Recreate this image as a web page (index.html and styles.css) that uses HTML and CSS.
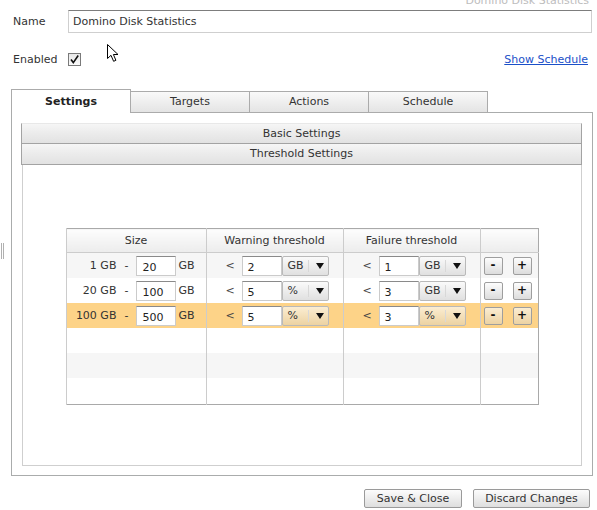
FILE: index.html
```html
<!DOCTYPE html>
<html>
<head>
<meta charset="utf-8">
<link rel="stylesheet" href="styles.css">
</head>
<body>
<div class="ghost">Domino Disk Statistics</div>
<div class="row name-row">
  <label class="lbl">Name</label>
  <div class="text-input">Domino Disk Statistics</div>
</div>
<div class="row enabled-row">
  <label class="lbl">Enabled</label>
  <span class="checkbox"><svg width="11" height="11" viewBox="0 0 11 11"><path d="M2 5.5 L4.3 8.6 L9.2 1.5" fill="none" stroke="#111" stroke-width="1.6"/></svg></span>
  <a class="link" href="#">Show Schedule</a>
</div>

<div class="tabs">
  <div class="tab active">Settings</div>
  <div class="tab">Targets</div>
  <div class="tab">Actions</div>
  <div class="tab">Schedule</div>
</div>
<div class="panel">
  <div class="acc-head first">Basic Settings</div>
  <div class="acc-head">Threshold Settings</div>
  <div class="acc-body">
    <table class="grid">
      <colgroup><col class="c1"><col class="c2"><col class="c3"><col class="c4"></colgroup>
      <thead>
        <tr><th>Size</th><th>Warning threshold</th><th>Failure threshold</th><th></th></tr>
      </thead>
      <tbody>
        <tr class="odd">
          <td><div class="size"><span>1 GB</span><span class="dash">-</span><span class="inp">20</span><span class="unit">GB</span></div></td>
          <td><div class="thr"><span class="lt">&lt;</span><span class="inp">2</span><span class="sel"><span class="sv">GB</span><span class="arrow"></span></span></div></td>
          <td><div class="thr"><span class="lt">&lt;</span><span class="inp">1</span><span class="sel"><span class="sv">GB</span><span class="arrow"></span></span></div></td>
          <td><div class="btns"><span class="sbtn">-</span><span class="sbtn">+</span></div></td>
        </tr>
        <tr>
          <td><div class="size"><span>20 GB</span><span class="dash">-</span><span class="inp">100</span><span class="unit">GB</span></div></td>
          <td><div class="thr"><span class="lt">&lt;</span><span class="inp">5</span><span class="sel"><span class="sv">%</span><span class="arrow"></span></span></div></td>
          <td><div class="thr"><span class="lt">&lt;</span><span class="inp">3</span><span class="sel"><span class="sv">GB</span><span class="arrow"></span></span></div></td>
          <td><div class="btns"><span class="sbtn">-</span><span class="sbtn">+</span></div></td>
        </tr>
        <tr class="hl">
          <td><div class="size"><span>100 GB</span><span class="dash">-</span><span class="inp">500</span><span class="unit">GB</span></div></td>
          <td><div class="thr"><span class="lt">&lt;</span><span class="inp">5</span><span class="sel"><span class="sv">%</span><span class="arrow"></span></span></div></td>
          <td><div class="thr"><span class="lt">&lt;</span><span class="inp">3</span><span class="sel"><span class="sv">%</span><span class="arrow"></span></span></div></td>
          <td><div class="btns"><span class="sbtn">-</span><span class="sbtn">+</span></div></td>
        </tr>
        <tr><td></td><td></td><td></td><td></td></tr>
        <tr class="odd"><td></td><td></td><td></td><td></td></tr>
        <tr class="last"><td></td><td></td><td></td><td></td></tr>
      </tbody>
    </table>
  </div>
</div>
<div class="footer">
  <span class="btn">Save &amp; Close</span>
  <span class="btn">Discard Changes</span>
</div>
<div class="grip"></div>
<svg class="cursor" width="14" height="20" viewBox="0 0 14 20"><path d="M0.5 0.5 L0.5 14.5 L4 11.3 L6.6 17.3 L8.9 16.3 L6.4 10.5 L11 10.5 Z" fill="#fff" stroke="#000" stroke-width="1" stroke-linejoin="miter"/></svg>
</body>
</html>
```
FILE: styles.css
```css
html, body {
  margin: 0;
  padding: 0;
  background: #fff;
}
body {
  font-family: "DejaVu Sans", Verdana, sans-serif;
  font-size: 11px;
  color: #333;
  position: relative;
  width: 597px;
  height: 510px;
  overflow: hidden;
}
.ghost {
  margin-top: -6px;
  height: 13px;
  line-height: 13px;
  text-align: right;
  padding-right: 8px;
  color: #bdbdbd;
}
.row {
  display: flex;
  align-items: center;
  padding-left: 13px;
}
.lbl {
  width: 55px;
  flex: none;
}
.name-row {
  margin-top: 3px;
  height: 23px;
}
.text-input {
  width: 524px;
  height: 23px;
  box-sizing: border-box;
  border: 1px solid #cfcfcf;
  border-top-color: #7d7d7d;
  padding-left: 4px;
  line-height: 21px;
  color: #333;
}
.enabled-row {
  margin-top: 20px;
  height: 13px;
}
.checkbox {
  width: 13px;
  height: 13px;
  box-sizing: border-box;
  border: 1px solid #7a7a7a;
  background: linear-gradient(#e8e8e8, #fafafa);
  display: flex;
  align-items: center;
  justify-content: center;
}
.link {
  margin-left: auto;
  margin-right: 9px;
  color: #1a4fc8;
  text-decoration: underline;
}
.tabs {
  display: flex;
  margin-top: 24px;
  margin-left: 11px;
  height: 23px;
  align-items: flex-end;
  position: relative;
  z-index: 1;
}
.tab {
  width: 120px;
  height: 22px;
  box-sizing: border-box;
  border: 1px solid #ababab;
  margin-left: -1px;
  background: linear-gradient(#f9f9f9, #e4e4e4);
  text-align: center;
  line-height: 19px;
  color: #333;
}
.tab.active {
  margin-left: 0;
  height: 24px;
  border-bottom: none;
  background: #fff;
  font-weight: bold;
  line-height: 23px;
  color: #222;
}
.panel {
  margin-left: 11px;
  margin-top: -1px;
  width: 582px;
  height: 364px;
  box-sizing: border-box;
  border: 1px solid #aaacac;
  padding: 10px 10px 9px 9px;
  display: flex;
  flex-direction: column;
}
.acc-head {
  height: 21px;
  box-sizing: border-box;
  border: 1px solid #a3a3a3;
  border-top: none;
  background: linear-gradient(#f6f6f6 0%, #ececec 45%, #e2e2e2 100%);
  text-align: center;
  line-height: 20px;
  color: #333;
}
.acc-head.first {
  border-top: 1px solid #e8e8e8;
  height: 21px;
}
.acc-body {
  flex: 1;
  margin: 0 0 0 1px;
  border: 1px solid #cfcfcf;
  border-top: none;
}
.grid {
  margin: 63px auto 0;
  width: 472px;
  border-collapse: collapse;
  table-layout: fixed;
  border: 1px solid #a9a9a9;
}
.c1 { width: 140px; }
.c2 { width: 137px; }
.c3 { width: 137px; }
.c4 { width: 58px; }
.grid th {
  height: 23px;
  padding: 0;
  font-weight: normal;
  color: #333;
  background: linear-gradient(#fdfdfd, #ececec);
  border-left: 1px solid #cccccc;
  border-bottom: 1px solid #cccccc;
}
.grid td {
  height: 25px;
  padding: 0;
  border-left: 1px solid #cccccc;
  vertical-align: middle;
}
.grid tr.odd td { background: #f6f6f6; }
.grid tr.hl td { background: #fdd388; }
.grid tr.last td { height: 26px; }
.size {
  display: flex;
  justify-content: flex-end;
  align-items: center;
  padding-right: 11px;
}
.dash {
  margin: 0 8px 0 8px;
}
.unit {
  margin-left: 2px;
}
.inp {
  width: 40px;
  height: 20px;
  box-sizing: border-box;
  border: 1px solid #cbcbcb;
  border-top-color: #8a8a8a;
  background: #fff;
  padding-left: 5px;
  line-height: 20px;
  padding-top: 1px;
  color: #222;
  flex: none;
}
.thr {
  display: flex;
  align-items: center;
  padding-left: 19px;
}
.lt {
  width: 16px;
  flex: none;
  color: #444;
}
.sel {
  width: 47px;
  height: 20px;
  box-sizing: border-box;
  border: 1px solid #b9b9b9;
  border-radius: 2px;
  background: linear-gradient(#fafafa, #e0e0e0);
  display: flex;
  align-items: center;
  flex: none;
}
.hl .sel, .hl .sbtn {
  background: linear-gradient(#fbedd2, #ecd2a2);
}
.sv {
  width: 26px;
  padding-left: 5px;
  box-sizing: border-box;
  border-right: 1px solid #d8d8d8;
  height: 12px;
  line-height: 12px;
  color: #333;
}
.arrow {
  margin-left: 7px;
  width: 0;
  height: 0;
  border-left: 4px solid transparent;
  border-right: 4px solid transparent;
  border-top: 6px solid #111;
}
.btns {
  display: flex;
  align-items: center;
  padding-left: 3px;
  gap: 10px;
}
.sbtn {
  width: 19px;
  height: 18px;
  box-sizing: border-box;
  border: 1px solid #9e9e9e;
  border-radius: 2px;
  background: linear-gradient(#fdfdfd, #dcdcdc);
  text-align: center;
  line-height: 15px;
  font-weight: bold;
  font-size: 12px;
  color: #111;
}
.footer {
  display: flex;
  justify-content: flex-end;
  gap: 11px;
  margin-top: 13px;
  padding-right: 7px;
}
.btn {
  height: 19px;
  box-sizing: border-box;
  border: 1px solid #9a9a9a;
  border-radius: 2px;
  background: linear-gradient(#fcfcfc, #dedede);
  line-height: 17px;
  padding: 0 13px;
  color: #333;
}
.btn:first-child { width: 98px; padding: 0; text-align: center; }
.btn:last-child { width: 117px; padding: 0; text-align: center; }
.grip {
  position: absolute;
  left: 1px;
  top: 243px;
  width: 1px;
  height: 16px;
  border-left: 1px solid #b0b0b0;
  border-right: 1px solid #b0b0b0;
}
.cursor {
  position: absolute;
  left: 107px;
  top: 44px;
}
```
